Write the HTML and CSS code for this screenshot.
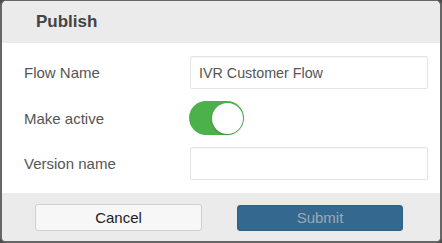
FILE: index.html
```html
<!DOCTYPE html>
<html lang="en">
<head>
    <meta charset="UTF-8">
    <title>Publish</title>
    <link rel="stylesheet" href="styles.css">
</head>
<body>
<div class="dialog">
    <div class="dialog-header">Publish</div>
    <div class="dialog-body">
        <div class="form-row">
            <label class="form-label">Flow Name</label>
            <input class="form-input" type="text" value="IVR Customer Flow">
        </div>
        <div class="form-row">
            <label class="form-label">Make active</label>
            <span class="switch on"><span class="knob"></span></span>
        </div>
        <div class="form-row">
            <label class="form-label">Version name</label>
            <input class="form-input" type="text" value="">
        </div>
    </div>
    <div class="dialog-footer">
        <button class="btn btn-cancel">Cancel</button>
        <button class="btn btn-submit">Submit</button>
    </div>
</div>
</body>
</html>
```

FILE: styles.css
```css
html, body {
    margin: 0;
    padding: 0;
    background: #4a4a4a;
}

.dialog {
    width: 442px;
    height: 243px;
    box-sizing: border-box;
    border: 2px solid #666;
    border-top-width: 1px;
    border-radius: 6px;
    overflow: hidden;
    background: #fff;
    display: flex;
    flex-direction: column;
    font-family: "Liberation Sans", Arial, sans-serif;
}

.dialog-header {
    height: 42px;
    background: #ebebeb;
    padding-left: 34px;
    font-size: 17px;
    font-weight: bold;
    color: #444;
    line-height: 41px;
}

.dialog-body {
    padding: 13px 12px 13px 22px;
    display: flex;
    flex-direction: column;
    gap: 12px;
}

.form-row {
    display: flex;
    align-items: center;
    min-height: 32px;
}

.form-label {
    width: 166px;
    font-size: 15px;
    color: #555;
}

.form-input {
    flex: 1;
    height: 33px;
    box-sizing: border-box;
    border: 1px solid #e4e4e4;
    border-radius: 2px;
    box-shadow: inset 0 1px 1px rgba(0, 0, 0, .03);
    padding: 0 8px;
    font-family: "Liberation Sans", Arial, sans-serif;
    font-size: 14.3px;
    color: #555;
    outline: none;
}

.switch {
    position: relative;
    display: inline-block;
    width: 55px;
    height: 34px;
    border-radius: 17px;
    background: #4cb14a;
    margin-left: -1px;
    box-sizing: border-box;
}

.switch .knob {
    position: absolute;
    top: 2px;
    right: 1px;
    width: 31px;
    height: 31px;
    border-radius: 50%;
    background: #fff;
    box-shadow: 0 1px 2px rgba(0, 0, 0, .25);
}

.dialog-footer {
    flex: 1;
    background: #ebebeb;
    display: flex;
    align-items: flex-start;
    padding: 11px 0 0 33px;
    gap: 35px;
}

.btn {
    width: 167px;
    height: 27px;
    box-sizing: border-box;
    border-radius: 3px;
    font-family: "Liberation Sans", Arial, sans-serif;
    font-size: 15px;
    padding: 0;
    line-height: 24px;
}

.btn-cancel {
    background: #f7f7f7;
    border: 1px solid #cfcfcf;
    color: #222;
}

.btn-submit {
    width: 166px;
    height: 26px;
    margin-top: 1px;
    background: #35688f;
    border: 1px solid #2f5f84;
    color: #9aa9b6;
}
```
